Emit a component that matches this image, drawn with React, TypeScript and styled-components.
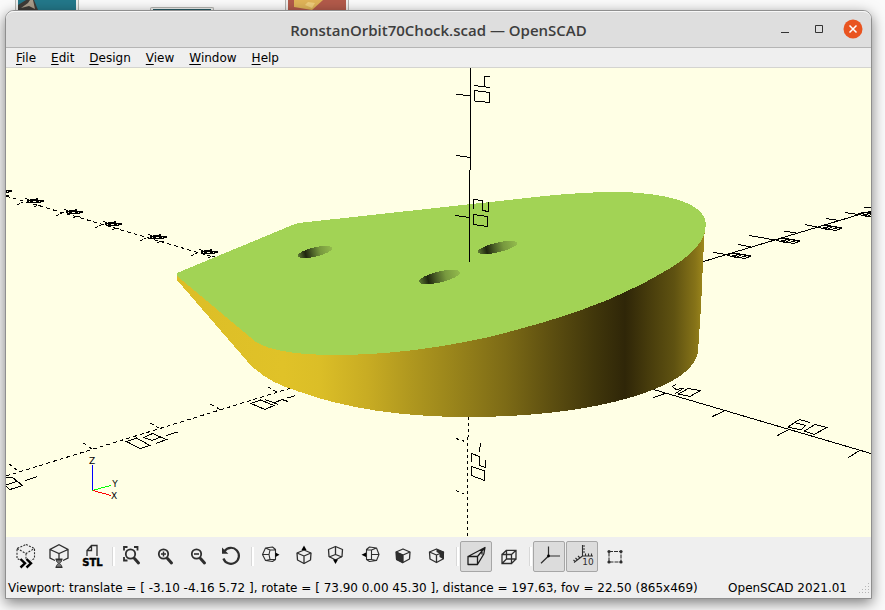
import React from "react";
import styled, { createGlobalStyle } from "styled-components";

const GlobalStyle = createGlobalStyle`
  * { box-sizing: border-box; }
  body { margin: 0; background: #fafafa; }
  button { font: inherit; color: inherit; margin: 0; }
`;

const Desktop = styled.div`
  display: flex;
  flex-direction: column;
  min-height: 100vh;
  overflow: hidden;
  background: #fafafa;
  font-family: "DejaVu Sans", sans-serif;
  font-size: 12px;
  color: #000;
`;

const ThumbStrip = styled.div`
  display: flex;
  align-items: flex-end;
  gap: 71px;
  height: 10px;
  padding-left: 15px;
`;

const Thumb = styled.div<{ $height: number }>`
  width: 64px;
  height: ${(p) => p.$height}px;
  padding: ${(p) => (p.$height < 10 ? "1px 2px 0" : "0 2px")};
  border: 1px solid #b4b4b0;
  border-width: ${(p) => (p.$height < 10 ? "1px 1px 0" : "0 1px")};
  border-radius: ${(p) => (p.$height < 10 ? "2px 2px 0 0" : "0")};
  background: #f0f0ee;

  svg {
    display: block;
    width: 100%;
    height: 100%;
  }
`;

const AppWindow = styled.div`
  position: relative;
  display: flex;
  flex-direction: column;
  flex: 1;
  margin: 0 13px 11px 5px;
  border: 1px solid #8f8f8f;
  border-radius: 9px 9px 0 0;
  background: #efefef;
  box-shadow: 0 4px 14px rgba(0, 0, 0, 0.5);
`;

const TitleBar = styled.header`
  display: grid;
  grid-template-columns: 1fr auto 1fr;
  align-items: center;
  height: 37px;
  padding: 0 6px;
  border-top: 1px solid #f8f8f8;
  border-bottom: 1px solid #b5b5b5;
  border-radius: 8px 8px 0 0;
  background: #dedede;
`;

const Title = styled.h1`
  grid-column: 2;
  margin: 0;
  font: 600 15px/20px "Open Sans", sans-serif;
  color: #3d3d3d;
  white-space: nowrap;
`;

const WindowControls = styled.div`
  display: flex;
  justify-content: flex-end;
  gap: 10px;
`;

const ControlButton = styled.button`
  width: 24px;
  height: 24px;
  padding: 0;
  border: 0;
  background: none;

  svg {
    display: block;
  }
`;

const MenuBar = styled.nav`
  display: flex;
  gap: 1px;
  height: 20px;
  padding-left: 3px;
  border-bottom: 1px solid #d4d4d0;
`;

const MenuButton = styled.button`
  padding: 1px 7px 0;
  border: 0;
  background: none;
  line-height: 18px;

  u {
    text-underline-offset: 2px;
    text-decoration-thickness: 1px;
  }
`;

const Viewport = styled.main`
  flex: 1;
  min-height: 0;
  background: #ffffe5;
`;

const Scene = styled.svg`
  display: block;
  width: 100%;
  height: 100%;
`;

const Toolbar = styled.div`
  display: flex;
  align-items: center;
  gap: 1px;
  padding: 4px;
`;

const ToolButton = styled.button<{ $pressed?: boolean }>`
  width: 32px;
  height: 31px;
  padding: 0;
  border: 1px solid ${(p) => (p.$pressed ? "#a6a6a6" : "transparent")};
  border-radius: 2px;
  background: ${(p) => (p.$pressed ? "#dcdcdc" : "none")};

  svg {
    display: block;
    width: 100%;
    height: 100%;
  }
`;

const Separator = styled.span`
  width: 6px;
  height: 19px;
  border-right: 2px solid #fff;
  box-shadow: inset -1px 0 0 #d8d8d8;
`;

const StatusBar = styled.footer`
  display: flex;
  align-items: center;
  justify-content: space-between;
  height: 22px;
  padding: 1px 1px 0 2px;
  white-space: nowrap;
`;

const Version = styled.span`
  display: flex;
  align-items: center;
  gap: 11px;
`;

const ink = "#2e2e2e";

const Cube = ({ x = 0, y = 0, flip = false }: { x?: number; y?: number; flip?: boolean }) => (
  <g transform={`translate(${x} ${y})`} fill="none" stroke={ink} strokeWidth="1.3" strokeLinejoin="round">
    <path d="M7 0 14 3 13.5 10 7 13.5 .5 10 0 3Z" />
    <path d={flip ? "M7 0V8M7 8 .5 10.5M7 8 13.5 10.5" : "M0 3 7 6 14 3M7 6V13.5"} />
  </g>
);

const Magnifier = () => (
  <g fill="none" stroke={ink}>
    <circle cx="14.5" cy="13" r="4.7" strokeWidth="1.8" />
    <path d="M18.5 17.5 22.5 22" strokeWidth="3" strokeLinecap="round" />
  </g>
);

const icons: Record<string, React.ReactNode> = {
  Preview: (
    <>
      <path d="M16 3.5 24.5 7.5V17.5L16 22 7 17.5V7.5ZM7 7.5 16 12.5 24.5 7.5M16 12.5V18" fill="none" stroke={ink} strokeWidth="1.1" strokeDasharray="2 1.3" />
      <path d="M10.5 18 15 22.3 10.5 26.5M16.5 18 21 22.3 16.5 26.5" fill="none" stroke="#efefef" strokeWidth="4" />
      <path d="M10.5 18 15 22.3 10.5 26.5M16.5 18 21 22.3 16.5 26.5" fill="none" stroke="#000" strokeWidth="2.4" />
    </>
  ),
  Render: (
    <>
      <path d="M12 19.5 7 17V8.5L16 3.7 25 8.5V17L20 19.5M7 8.5 16 12.5 25 8.5M16 12.5V18" fill="none" stroke={ink} strokeWidth="1.3" />
      <path d="M12.5 18.2H19.5M12.5 26.2H19.5" stroke={ink} strokeWidth="1.4" />
      <path d="M13.5 19H18.5V20.5L16.5 22.2 18.5 24.5V26H13.5V24.5L15.5 22.2 13.5 20.5Z" fill="#777" stroke={ink} strokeWidth=".8" />
    </>
  ),
  "Export as STL": (
    <>
      <path d="M11 15V9.5L15.5 4.5H21V15M15.5 4.5V9.5H11" fill="none" stroke={ink} strokeWidth="1.3" />
      <text x="16.5" y="25" textAnchor="middle" fontFamily="DejaVu Sans" fontWeight="700" fontSize="10" stroke="#000" strokeWidth=".4">STL</text>
    </>
  ),
  "View All": (
    <>
      <Magnifier />
      <path d="M8 9.5V6H11.5M18 6H21.5V9.5M8 16V19.5H11.5" fill="none" stroke={ink} strokeWidth="1.8" />
    </>
  ),
  "Zoom In": (
    <>
      <Magnifier />
      <path d="M12 13H17M14.5 10.5V15.5" stroke={ink} strokeWidth="1.4" />
    </>
  ),
  "Zoom Out": (
    <>
      <Magnifier />
      <path d="M12 13H17" stroke={ink} strokeWidth="1.6" />
    </>
  ),
  "Reset View": (
    <>
      <path d="M9.5 10A8 8 0 1 1 8.4 17.5" fill="none" stroke={ink} strokeWidth="2.2" />
      <path d="M7 6.5V12.8H13.3Z" fill={ink} />
    </>
  ),
  Right: (
    <>
      <path d="M7.5 13.5 10.5 7 17.5 6 20.5 8.5V18.5L17.5 20.5 10.5 19.5ZM10.5 7 15 9H20.5M15 9 14 13.5 15 18.5H20.5M15 18.5 10.5 19.5M7.5 13.5H14" fill="none" stroke={ink} strokeWidth="1.1" strokeLinejoin="round" />
      <path d="M20.5 11.5 24.5 13.7 20.5 16Z" fill="#000" />
    </>
  ),
  Top: (
    <>
      <Cube x={9} y={9} />
      <path d="M13.5 9 16 4.5 18.5 9Z" fill="#000" />
    </>
  ),
  Bottom: (
    <>
      <Cube x={7.5} y={5.5} flip />
      <path d="M12 18.5 14.5 23 17 18.5Z" fill="#000" />
    </>
  ),
  Left: (
    <>
      <path d="M25 13.5 22.5 7 15.5 6 12.5 8.5V18.5L15.5 20.5 22.5 19.5ZM22.5 7 17.5 9H12.5M17.5 9V18.5H12.5M17.5 18.5 22.5 19.5M17.5 13.5H25" fill="none" stroke={ink} strokeWidth="1.1" strokeLinejoin="round" />
      <path d="M12 11.5 7.5 13.7 12 16Z" fill="#000" />
    </>
  ),
  Front: (
    <>
      <path d="M9 10.5 16 13.5V22.5L9 19Z" fill={ink} />
      <Cube x={9} y={8} />
    </>
  ),
  Back: (
    <>
      <path d="M16.5 8 24 11V18.5L19.5 16V12.5L16.5 11Z" fill={ink} />
      <Cube x={9.5} y={8} />
    </>
  ),
  Perspective: (
    <path d="M8 15.5H17.5V23.5H8ZM8 15.5 25 6.5 17.5 15.5M25 6.5 23.8 13 17.5 23.5M22 8.2V13.5" fill="none" stroke="#1c1c1c" strokeWidth="1.3" strokeLinejoin="round" />
  ),
  Orthogonal: (
    <path d="M9 13.5H18.5V22.5H9ZM13.5 9.3H23V18H13.5ZM9 13.5 13.5 9.3M18.5 13.5 23 9.3M9 22.5 13.5 18M18.5 22.5 23 18" fill="none" stroke={ink} strokeWidth="1.3" />
  ),
  "Show Axes": (
    <>
      <path d="M15.5 5.5V15H27M15.5 15 8 22.3" fill="none" stroke={ink} strokeWidth="1.2" />
      <circle cx="15.5" cy="15" r="1.4" />
    </>
  ),
  "Show Scale Markers": (
    <>
      <path d="M16.5 4V15H27M16.5 15 8 21.5M16.5 5H19M16.5 8H19M16.5 11H19M19.5 15V12.5M22.5 15V12.5M25.5 15V12.5M14 17 12 15M11.5 19 9.5 17M9 20.5 7.5 19" fill="none" stroke={ink} strokeWidth="1.1" />
      <text x="22" y="24" textAnchor="middle" fontFamily="DejaVu Sans" fontSize="9" fill={ink}>10</text>
    </>
  ),
  "Show Edges": (
    <>
      <path d="M10 10.5H22V21H10Z" fill="none" stroke={ink} strokeWidth="1.1" strokeDasharray="4 1" />
      <g fill={ink}>
        <circle cx="10" cy="10.5" r="1.6" />
        <circle cx="22" cy="10.5" r="1.6" />
        <circle cx="10" cy="21" r="1.6" />
        <circle cx="22" cy="21" r="1.6" />
      </g>
    </>
  ),
};

const toolGroups: string[][] = [
  ["Preview", "Render", "Export as STL"],
  ["View All", "Zoom In", "Zoom Out", "Reset View"],
  ["Right", "Top", "Bottom", "Left", "Front", "Back"],
  ["Perspective", "Orthogonal"],
  ["Show Axes", "Show Scale Markers", "Show Edges"],
];

const pressed = new Set(["Perspective", "Show Axes", "Show Scale Markers"]);

const holes = [
  { cx: 315, cy: 252, rx: 17.5, ry: 4.7 },
  { cx: 439.5, cy: 277, rx: 21, ry: 5.5 },
  { cx: 497.5, cy: 247.5, rx: 20, ry: 4.9 },
];

const farMarks = [
  [727, 253],
  [776, 238],
  [818, 225],
  [858, 212],
];

const dashedMarks = [
  [-8, 188],
  [24, 198],
  [63, 209],
  [102, 221],
  [147, 234],
  [198, 249],
];

const Model = () => (
  <Scene viewBox="6 68 865 469" preserveAspectRatio="xMidYMid slice" shapeRendering="crispEdges" role="img" aria-label="3D view">
    <defs>
      <linearGradient id="side" gradientUnits="userSpaceOnUse" x1="177" y1="0" x2="706" y2="0">
        <stop offset="0" stopColor="#dcbe27" />
        <stop offset=".2" stopColor="#e0c228" />
        <stop offset=".27" stopColor="#dbbe27" />
        <stop offset=".36" stopColor="#c8ac23" />
        <stop offset=".44" stopColor="#b0981f" />
        <stop offset=".52" stopColor="#9a851b" />
        <stop offset=".62" stopColor="#7d6b16" />
        <stop offset=".71" stopColor="#5c4e10" />
        <stop offset=".79" stopColor="#40360b" />
        <stop offset=".847" stopColor="#2f2608" />
        <stop offset=".89" stopColor="#463b0c" />
        <stop offset=".94" stopColor="#5f5211" />
        <stop offset=".98" stopColor="#867318" />
        <stop offset="1" stopColor="#a38d1d" />
      </linearGradient>
      <linearGradient id="hole">
        <stop offset="0" stopColor="#5f7c33" />
        <stop offset=".22" stopColor="#1f260f" />
        <stop offset=".42" stopColor="#4a5f27" />
        <stop offset=".65" stopColor="#77983e" />
        <stop offset="1" stopColor="#93bb4d" />
      </linearGradient>
    </defs>

    <g fill="none" stroke="#000" strokeWidth="1">
      <path d="M470.5 68V170" />
      <path d="M456 94.5 470 95.5M456 155.5 470 157.5" />
      <path d="M468.5 417V437M467.5 437V537" strokeDasharray="3 3" />
      <path d="M456 438.5 465 441.5M456 490.5 465 494.5" strokeDasharray="3 3" />
      <path d="M474.5 90.5 489.5 92.5V102.5L474.5 101ZM474 85.5 490 87.5M484.5 87V76.5H490" />
      <path d="M480.5 443 479.5 452M471.5 461.5V453.5L479.5 456.5V465.5L485.5 467.5V459.5M471.5 466.5 484.5 471V480.5L471.5 475.5Z" />

      <path d="M653.5 389.5 871 453.5M665 393.5 653.5 397.5M725 410.5 712.5 416.5M790 429 777.5 435.5M859.5 450.5 848.5 457.5" />
      <path d="M676 384.5 672.5 386.5 676 389.5 684.5 388M675.5 393.5 684.5 387.5M678.5 394 688 388.5 700.5 390.5 690 396.5Z" />
      <path d="M810 422.5 799.5 419.5 788 427 801 430 805.5 425.5 794 422.5M804.5 431 815 424.5 827 427.5 814 434.5Z" />

      <path d="M703.5 261.5 871 211M713.5 252.5 726 254.5M738.5 244.5 751 247M749.5 235.5 775 240M784 231 796 233M805 224.5 817 227M826 218.5 839 220.5M845 212.5 858 214.5M864 207.5H871" />
      {farMarks.map(([x, y]) => (
        <path key={x} transform={`translate(${x} ${y})`} d="M0 2 6 0 14 2 9 4.5 3 3ZM5 3 14 1 24 3 18 5.5 9 4ZM10 0 20 3M12 5 22 2" />
      ))}

      <path d="M6 196 213 257" strokeDasharray="4 3" />
      {dashedMarks.map(([x, y]) => (
        <g key={x} transform={`translate(${x} ${y})`}>
          <path d="M1 0 7 3M3 4 8 1 20 3 12 5 6 3 13 1M3 2.5H20M4 5 14 0M6 4H15M8 1 17 5" />
          <path d="M-7 7-1 4M10 9 14 7 20 8" strokeDasharray="3 2" />
        </g>
      ))}

      <path d="M6 476 291 388M277 392 268 387M220 409.5 210.5 404M159.5 428.5 149.5 422.5M92 449 82.5 442.5M17.5 470.5 8.5 463.5" strokeDasharray="4 3" />
      <path d="M251 403.5 260.5 400 274 405.5 265 409.5ZM265 399.5 278.5 404.5M275 402.5 282 399.5 288 401.5M287.5 398 295.5 395.5" />
      <path d="M126.5 441.5 136.5 438 150 445.5 140 448.5ZM144 437.5 152.5 433.5 160.5 437 152 440.5ZM160.5 437 166.5 439.5 156 443.5M166.5 435.5 177.5 432" />
      <path d="M6 477.5H12.5L22.5 485.5 10 489.5 6 486.5M6 485 17 481.5M25.5 480.5 37.5 476.5" />
    </g>

    <path
      fill="url(#side)"
      d="M177 273V280L247 361Q265 382 300 392C345 408 400 417 469 417C540 417 600 408 640 394.5C675 383 695 369 698 352L701 307 703 262 705 225 560 240 300 300Z"
    />
    <path
      fill="#a2d355"
      d="M177 273 290 226Q296 223 303 222.5L545 196C575 193 595 192 615 192C665 192 706 203 706 224C706 248 680 264 640 285C594 309 541 324 489 337C430 350 380 355 335 355C300 355 270 351 256 342L177 276Z"
    />
    {holes.map((h) => (
      <ellipse key={h.cx} {...h} fill="url(#hole)" transform={`rotate(-13 ${h.cx} ${h.cy})`} />
    ))}
    <g fill="none" stroke="#000">
      <path d="M469.5 170V262M455 215.5 469 217.5" />
      <path d="M473.5 214.5 487.5 216.5V226.5L473.5 224.5ZM473.5 208.5V199.5L482.5 200.5V210.5L488.5 211.5V202" />
    </g>

    <path d="M92.5 490V465" stroke="#00f" />
    <path d="M92 490.5 111 485.5" stroke="#0f0" />
    <path d="M93 490.5 111 495.5" stroke="#f00" />
    <g fontFamily="DejaVu Sans" fontSize="9" textAnchor="middle">
      <text x="92" y="464">Z</text>
      <text x="115" y="487">Y</text>
      <text x="114" y="499">X</text>
    </g>
  </Scene>
);

const menus = ["File", "Edit", "Design", "View", "Window", "Help"];

export default function App() {
  return (
    <Desktop>
      <GlobalStyle />
      <ThumbStrip>
        <Thumb $height={10}>
          <svg viewBox="0 0 58 10" preserveAspectRatio="none">
            <path fill="#23788a" d="M0 0H58V10H0Z" />
            <path fill="#3d3a36" d="M0 10V5L8 0H16L20 10Z" />
            <path fill="#a99c8a" d="M3 8 10 3 12 0 15 0 17 9 11 6Z" />
          </svg>
        </Thumb>
        <Thumb $height={3}>
          <svg viewBox="0 0 58 1" preserveAspectRatio="none">
            <path fill="#285b66" d="M0 0H58V1H0Z" />
          </svg>
        </Thumb>
        <Thumb $height={10}>
          <svg viewBox="0 0 58 10" preserveAspectRatio="none">
            <path fill="#b25a4a" d="M0 0H58V10H0Z" />
            <path fill="#e0b458" d="M6 0H35L24 10 6 7Z" />
            <path fill="#efce7c" d="M20 2 27 3 24 8 17 5Z" />
          </svg>
        </Thumb>
      </ThumbStrip>
      <AppWindow>
        <TitleBar>
          <Title>RonstanOrbit70Chock.scad — OpenSCAD</Title>
          <WindowControls>
            <ControlButton aria-label="Minimize">
              <svg width="24" height="24" viewBox="0 0 24 24">
                <path d="M8 14.5H16" stroke="#333" />
              </svg>
            </ControlButton>
            <ControlButton aria-label="Maximize">
              <svg width="24" height="24" viewBox="0 0 24 24">
                <path d="M8.5 7.5H15.5V14.5H8.5Z" fill="none" stroke="#333" />
              </svg>
            </ControlButton>
            <ControlButton aria-label="Close">
              <svg width="24" height="24" viewBox="0 0 24 24">
                <circle cx="12" cy="11" r="9.5" fill="#e95420" />
                <path d="M8.5 7.5 15.5 14.5M15.5 7.5 8.5 14.5" stroke="#fff" strokeWidth="1.5" />
              </svg>
            </ControlButton>
          </WindowControls>
        </TitleBar>
        <MenuBar>
          {menus.map((m) => (
            <MenuButton key={m}>
              <u>{m[0]}</u>
              {m.slice(1)}
            </MenuButton>
          ))}
        </MenuBar>
        <Viewport>
          <Model />
        </Viewport>
        <Toolbar role="toolbar">
          {toolGroups.map((group, i) => (
            <React.Fragment key={i}>
              {i > 0 && <Separator />}
              {group.map((name) => (
                <ToolButton key={name} aria-label={name} $pressed={pressed.has(name)}>
                  <svg viewBox="1 1 30 29">{icons[name]}</svg>
                </ToolButton>
              ))}
            </React.Fragment>
          ))}
        </Toolbar>
        <StatusBar>
          <span>Viewport: translate = [ -3.10 -4.16 5.72 ], rotate = [ 73.90 0.00 45.30 ], distance = 197.63, fov = 22.50 (865x469)</span>
          <Version>
            OpenSCAD 2021.01
            <svg width="12" height="12" viewBox="0 0 12 12" fill="#b5b5b5" shapeRendering="crispEdges">
              <path d="M10 1h1v1h-1zM7 4h1v1H7zM10 4h1v1h-1zM4 7h1v1H4zM7 7h1v1H7zM10 7h1v1h-1zM1 10h1v1H1zM4 10h1v1H4zM7 10h1v1H7zM10 10h1v1h-1z" />
            </svg>
          </Version>
        </StatusBar>
      </AppWindow>
    </Desktop>
  );
}
